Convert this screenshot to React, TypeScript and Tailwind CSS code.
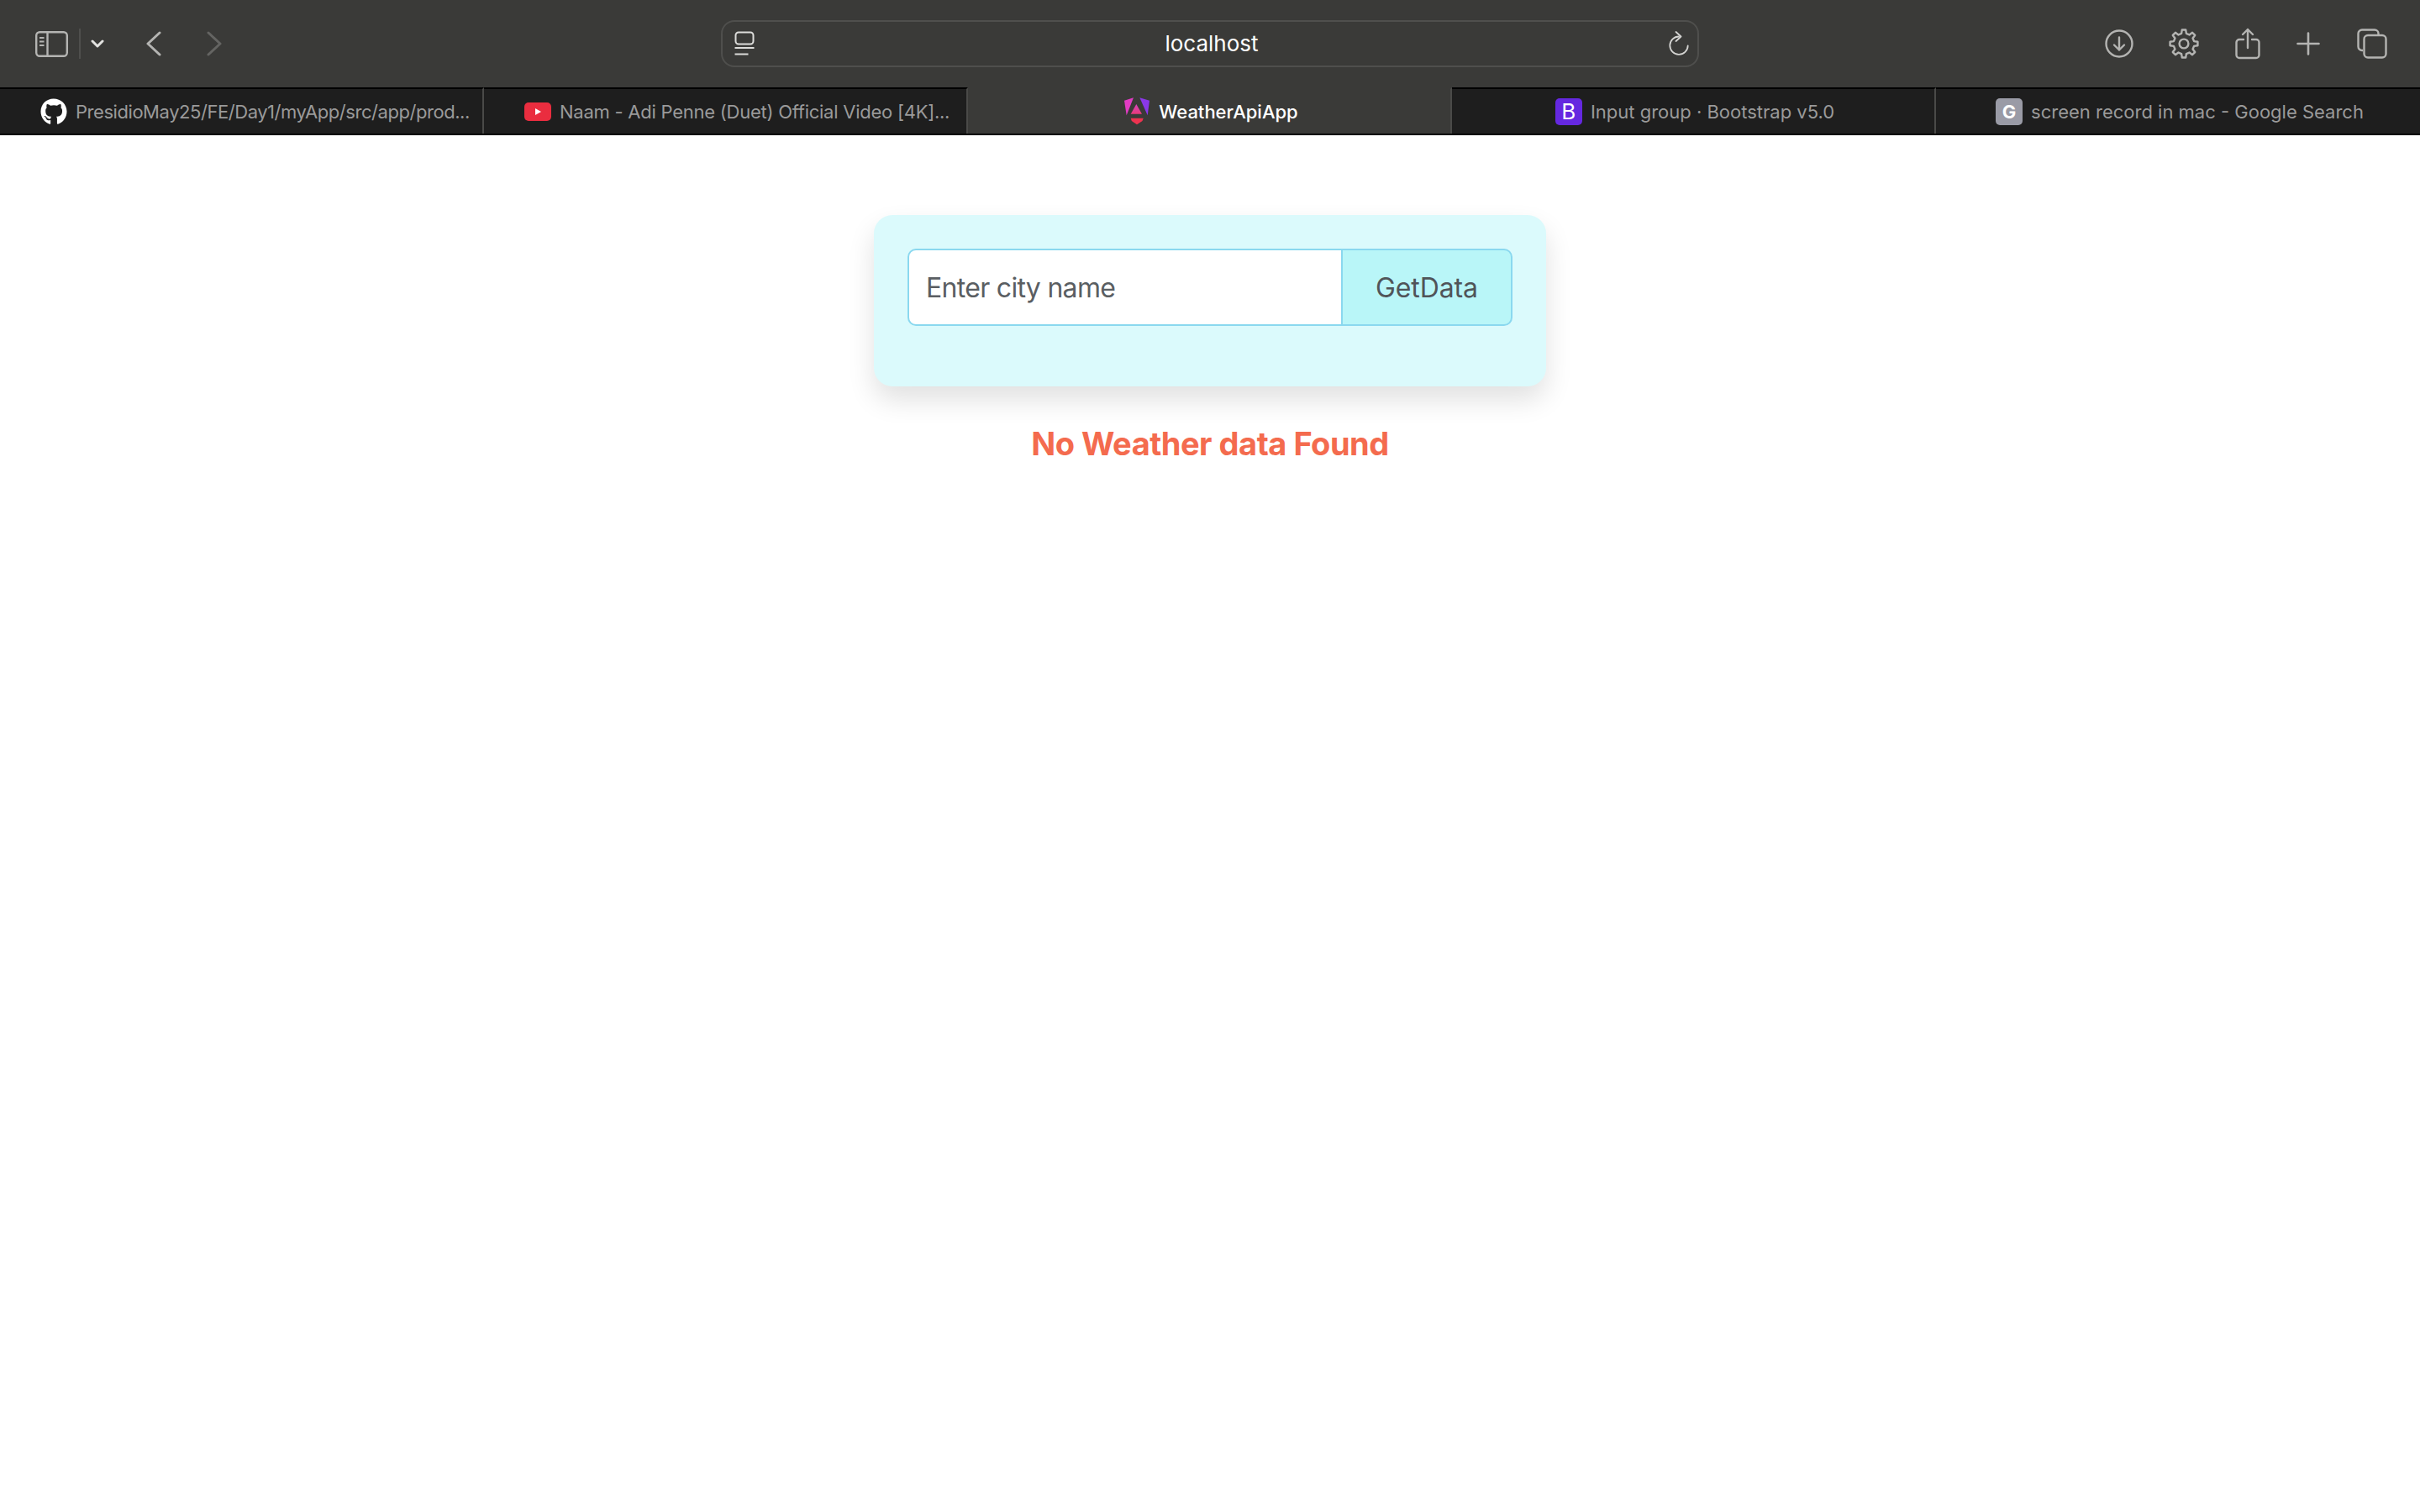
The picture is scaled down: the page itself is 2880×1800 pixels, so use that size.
import React from "react";
import { FaGithub } from "react-icons/fa";

const stroke = "#b4b4b2";

function gearPath(cx: number, cy: number, outer: number, inner: number, teeth: number) {
  const pts: string[] = [];
  const step = (Math.PI * 2) / teeth;
  for (let i = 0; i < teeth; i++) {
    const a = i * step - Math.PI / 2;
    const seq: [number, number][] = [
      [a - step * 0.3, inner],
      [a - step * 0.17, outer],
      [a + step * 0.17, outer],
      [a + step * 0.3, inner],
    ];
    seq.forEach(([t, r]) => pts.push(`${(cx + r * Math.cos(t)).toFixed(2)} ${(cy + r * Math.sin(t)).toFixed(2)}`));
  }
  return "M" + pts.join("L") + "Z";
}

function Tab({
  icon,
  label,
  active,
  last,
  left,
  labelClass = "",
}: {
  icon: React.ReactNode;
  label: string;
  active?: boolean;
  last?: boolean;
  left?: boolean;
  labelClass?: string;
}) {
  return (
    <div
      className={`min-w-0 flex items-center gap-[10px] h-full border-t-2 ${left ? "justify-start pl-[48px]" : "justify-center pl-[4px]"} ${last ? "" : "border-r-2 border-r-[#4a4a48]"} ${active ? "bg-[#3a3a38] border-t-[#3a3a38] text-white font-medium" : "border-t-black text-[#9a9a9a]"}`}
    >
      <span className="w-8 h-8 shrink-0 flex items-center justify-center">{icon}</span>
      <span className={`text-[22px] leading-8 whitespace-nowrap ${labelClass}`}>{label}</span>
    </div>
  );
}

function Toolbar() {
  return (
    <div className="h-[104px] bg-[#3a3a38] flex items-center">
      <div className="flex items-center ml-[42px] w-[816px] h-full">
        <svg width="39" height="31" viewBox="0 0 39 31" fill="none" stroke={stroke} strokeWidth="2.4">
          <rect x="1.2" y="1.2" width="36.6" height="28.6" rx="4" />
          <path d="M14.5 1.2V29.8" />
          <path d="M5 8h5.5M5 12.5h5.5M5 17h5.5" strokeWidth="2" />
        </svg>
        <div className="w-[2px] h-[36px] bg-[#4f4f4d] ml-[13px]" />
        <svg className="ml-[12px]" width="16" height="12" viewBox="0 0 16 12" fill="none" stroke="#e2e2e0" strokeWidth="3" strokeLinecap="round" strokeLinejoin="round">
          <path d="M2 3l6 6 6-6" />
        </svg>
        <svg className="ml-[49px]" width="20" height="30" viewBox="0 0 20 30" fill="none" stroke={stroke} strokeWidth="3" strokeLinecap="round" strokeLinejoin="round">
          <path d="M17 2L3 15l14 13" />
        </svg>
        <svg className="ml-[52px]" width="20" height="30" viewBox="0 0 20 30" fill="none" stroke="#646462" strokeWidth="3" strokeLinecap="round" strokeLinejoin="round">
          <path d="M3 2l14 13L3 28" />
        </svg>
      </div>
      <div className="w-[1164px] h-[56px] border-2 border-[#4f4f4d] rounded-[16px] flex items-center justify-between pl-[14px] pr-[10px] relative">
        <svg width="24" height="30" viewBox="0 0 24 30" fill="none" stroke="#dcdcda" strokeWidth="2">
          <rect x="1.5" y="1.5" width="21" height="14" rx="3.5" />
          <path d="M0.5 20h23" />
          <path d="M0.5 27.5h16" />
        </svg>
        <span className="absolute left-[4px] right-0 text-center text-[26px] leading-9 text-white">localhost</span>
        <svg width="24" height="30" viewBox="0 0 24 30" fill="none" stroke="#d4d4d2" strokeWidth="1.8" strokeLinecap="round" strokeLinejoin="round">
          <path d="M12 6.5A10.7 10.7 0 1 0 22.7 17.5" />
          <path d="M8.5 1l6 5.5-6 5.5" />
        </svg>
      </div>
      <div className="flex-1 flex items-center justify-end pr-[39px]">
        <svg width="34" height="34" viewBox="0 0 34 34" fill="none" stroke={stroke} strokeWidth="2.4" strokeLinecap="round" strokeLinejoin="round">
          <circle cx="17" cy="17" r="15.5" />
          <path d="M17 9.5v15M11 18.5l6 6 6-6" />
        </svg>
        <svg className="ml-[42px]" width="36" height="36" viewBox="0 0 36 36" fill="none" stroke={stroke} strokeWidth="2.4" strokeLinejoin="round">
          <path d={gearPath(18, 18, 16.6, 12.4, 8)} />
          <circle cx="18" cy="18" r="5.4" />
        </svg>
        <svg className="ml-[43px]" width="30" height="38" viewBox="0 0 30 38" fill="none" stroke={stroke} strokeWidth="2.4" strokeLinecap="round" strokeLinejoin="round">
          <path d="M10 14H5a3.5 3.5 0 0 0-3.5 3.5v15A3.5 3.5 0 0 0 5 36h20a3.5 3.5 0 0 0 3.5-3.5v-15A3.5 3.5 0 0 0 25 14h-5" />
          <path d="M15 24V2M9 8l6-6 6 6" />
        </svg>
        <svg className="ml-[43px]" width="28" height="28" viewBox="0 0 28 28" fill="none" stroke={stroke} strokeWidth="2.6" strokeLinecap="round">
          <path d="M14 1.5v25M1.5 14h25" />
        </svg>
        <svg className="ml-[44px]" width="36" height="36" viewBox="0 0 36 36" fill="none" stroke={stroke} strokeWidth="2.4" strokeLinejoin="round">
          <path d="M7 26H6a4.5 4.5 0 0 1-4.5-4.5V6A4.5 4.5 0 0 1 6 1.5h15A4.5 4.5 0 0 1 25.5 6v2" />
          <rect x="8.5" y="8" width="26" height="26.5" rx="4.5" />
        </svg>
      </div>
    </div>
  );
}

function Tabs() {
  return (
    <div className="h-[57px] bg-[#1e1e1e] border-b-2 border-black grid grid-cols-5">
      <Tab left labelClass="tracking-[-0.45px]" label="PresidioMay25/FE/Day1/myApp/src/app/prod..." icon={<FaGithub className="w-8 h-8 text-white" />} />
      <Tab
        left
        labelClass="tracking-[-0.25px]"
        label="Naam - Adi Penne (Duet) Official Video [4K]..."
        icon={
          <svg width="32" height="32" viewBox="0 0 32 32">
            <rect x="0" y="5" width="32" height="22" rx="5" fill="#ea2d3f" />
            <path d="M13 12l7 4-7 4z" fill="#fff" />
          </svg>
        }
      />
      <Tab
        active
        label="WeatherApiApp"
        icon={
          <svg width="32" height="33" viewBox="0 0 32 33">
            <defs>
              <linearGradient id="ngb" x1="0" y1="0" x2="0" y2="1">
                <stop offset="0" stopColor="#d845c0" />
                <stop offset="1" stopColor="#e83a78" />
              </linearGradient>
            </defs>
            <path d="M12 0.3L1 3.7l2.7 17.6z" fill="#e23cc4" />
            <path d="M19.3 0.3L31 3.7l-2.3 17.6z" fill="#8a38e8" />
            <path d="M15.3 8L22 19.7H8.7z" fill="url(#ngb)" />
            <path d="M8.7 24.7h15l-1.2 3.4-6.5 4.2-6.2-4.2z" fill="#ee3350" />
          </svg>
        }
      />
      <Tab
        label="Input group · Bootstrap v5.0"
        icon={<span className="w-8 h-8 rounded-[5px] bg-[#6528e0] text-white text-[26px] leading-8 text-center font-normal">B</span>}
      />
      <Tab
        last
        label="screen record in mac - Google Search"
        icon={<span className="w-8 h-8 rounded-[5px] bg-[#9a9ba6] text-white text-[22px] leading-8 text-center font-bold">G</span>}
      />
    </div>
  );
}

export default function App() {
  return (
    <div className="min-h-screen bg-white font-['Inter',sans-serif]">
      <Toolbar />
      <Tabs />
      <main className="flex flex-col items-center pt-[95px]">
        <div className="w-[800px] h-[204px] bg-[#dbfafc] rounded-[22px] p-10 shadow-[0_16px_32px_rgba(0,0,0,0.12)]">
          <div className="flex h-[92px]">
            <input
              placeholder="Enter city name"
              className="flex-1 min-w-0 bg-white border-2 border-[#8ad8ef] rounded-l-[10px] px-[20px] pt-[2px] text-[32px] tracking-[-0.7px] text-[#5a5e62] placeholder:text-[#5a5e62] outline-none"
            />
            <button className="w-[204px] -ml-[2px] pt-[2px] bg-[#b9f6f8] border-2 border-[#8ad8ef] rounded-r-[10px] text-[32px] tracking-[-0.1px] text-[#505458]">
              GetData
            </button>
          </div>
        </div>
        <h2 className="mt-[40px] text-[38px] leading-[56px] tracking-[-0.48px] font-bold text-[#f46b4e]">No Weather data Found</h2>
      </main>
    </div>
  );
}
